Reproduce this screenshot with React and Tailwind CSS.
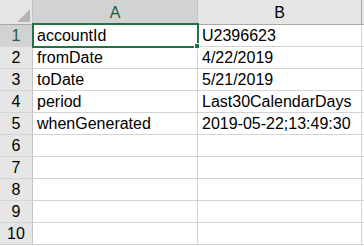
const rows = [
  ["accountId", "U2396623"],
  ["fromDate", "4/22/2019"],
  ["toDate", "5/21/2019"],
  ["period", "Last30CalendarDays"],
  ["whenGenerated", "2019-05-22;13:49:30"],
  ["", ""],
  ["", ""],
  ["", ""],
  ["", ""],
  ["", ""],
];

const font = { fontFamily: '"Liberation Sans", Arial, sans-serif' };

export default function App() {
  return (
    <div
      className="relative w-[364px] h-[246px] overflow-hidden bg-white text-[16px] text-black"
      style={font}
    >
      {/* header row */}
      <div className="flex h-[25px] border-b border-[#a8a8a8] bg-[#e6e6e6]">
        <div className="relative w-[33px] border-r border-[#c4c4c4]">
          <svg className="absolute left-0 top-0" width="32" height="24">
            <polygon points="30,9 30,22 17,22" fill="#b5b5b5" />
          </svg>
        </div>
        <div className="w-[165px] border-r border-[#c4c4c4] bg-[#d2d2d2] flex items-center justify-center leading-none pt-[2px] text-[#1e5a36]">
          A
        </div>
        <div className="w-[164px] border-r border-[#a8a8a8] flex items-center justify-center leading-none pt-[2px]">
          B
        </div>
      </div>

      {rows.map(([a, b], i) => (
        <div key={i} className="flex h-[22px] border-b border-[#d4d4d4]">
          <div
            className={`w-[33px] border-r border-[#c4c4c4] flex items-end justify-center leading-[18px] pb-[1px] ${
              i === 0 ? "bg-[#d2d2d2] text-[#1e5a36]" : "bg-[#e6e6e6]"
            }`}
          >
            {i + 1}
          </div>
          <div className="w-[165px] border-r border-[#d4d4d4] flex items-end pl-[4px] leading-[18px] pb-[1px] whitespace-nowrap">
            {a}
          </div>
          <div className="w-[164px] border-r border-[#d4d4d4] flex items-end pl-[4px] leading-[18px] pb-[1px] whitespace-nowrap">
            {b}
          </div>
        </div>
      ))}

      {/* active cell */}
      <div className="absolute left-[32px] top-[23px] w-[167px] h-[25px] border-2 border-[#217346]" />
      <div className="absolute left-[194px] top-[43px] w-[6px] h-[6px] bg-[#217346] border border-white" />
    </div>
  );
}
